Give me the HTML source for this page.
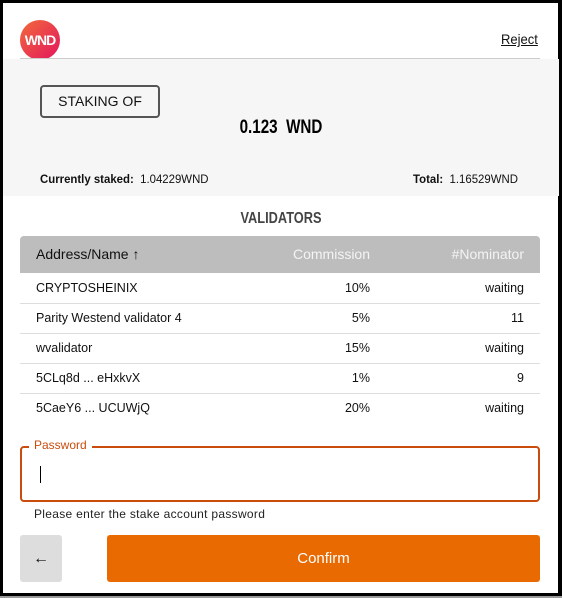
<!DOCTYPE html><html><head><style>
body{margin:0;width:562px;height:598px;background:#fff;font-family:"Liberation Sans",sans-serif;position:relative;overflow:hidden}
.a{position:absolute}
</style></head><body>
<div class="a" style="left:0;top:0;width:562px;height:596px;box-sizing:border-box;border:3px solid #000;border-right-width:4px"></div>
<div class="a" style="left:0;top:596px;width:562px;height:2px;background:#999"></div>
<div class="a" style="left:20px;top:20px;width:40px;height:40px;border-radius:50%;background:linear-gradient(135deg,#f26a3a,#e3155e);color:#fff;font-weight:bold;font-size:14px;line-height:40px;text-align:center;letter-spacing:-1px">WND</div>
<div class="a" style="left:501px;top:31px;font-size:14px;text-decoration:underline;color:#111;transform:scaleX(.93);transform-origin:left">Reject</div>
<div class="a" style="left:3px;top:59px;width:556px;height:137px;background:#f6f6f6"></div>
<div class="a" style="left:20px;top:58px;width:520px;height:1px;background:#ccc"></div>
<div class="a" style="left:40px;top:85px;width:116px;height:29px;border:2px solid #555;border-radius:4px;font-size:14px;line-height:29px;text-align:center;color:#111">STAKING OF</div>
<div class="a" style="left:0;top:117px;width:562px;text-align:center;font-size:19px;font-weight:bold;transform:scaleX(.8);color:#000">0.123&nbsp; WND</div>
<div class="a" style="left:40px;top:172px;font-size:12px;color:#111;transform:scaleX(.95);transform-origin:left"><b style="font-weight:600">Currently staked:</b>&nbsp; 1.04229WND</div>
<div class="a" style="left:413px;top:172px;font-size:12px;color:#111;transform:scaleX(.95);transform-origin:left"><b style="font-weight:600">Total:</b>&nbsp; 1.16529WND</div>
<div class="a" style="left:0;top:210px;width:562px;text-align:center;font-size:16px;font-weight:bold;color:#444;transform:scaleX(.8)">VALIDATORS</div>
<div class="a" style="left:20px;top:236px;width:520px;height:37px;background:#bdbdbd;border-radius:4px 4px 0 0;font-size:14px;line-height:37px">
<span class="a" style="left:16px;color:#111">Address/Name <b>&#8593;</b></span>
<span class="a" style="right:170px;color:#f4f4f4">Commission</span>
<span class="a" style="right:16px;color:#f4f4f4">#Nominator</span></div>
<div class="a" style="left:20px;top:273px;width:520px;font-size:12.5px;color:#111">
<div style="height:30px;line-height:30px;border-bottom:1px solid #ddd;position:relative"><span class="a" style="left:16px">CRYPTOSHEINIX</span><span class="a" style="right:170px">10%</span><span class="a" style="right:16px">waiting</span></div>
<div style="height:29px;line-height:29px;border-bottom:1px solid #ddd;position:relative"><span class="a" style="left:16px">Parity Westend validator 4</span><span class="a" style="right:170px">5%</span><span class="a" style="right:16px">11</span></div>
<div style="height:29px;line-height:29px;border-bottom:1px solid #ddd;position:relative"><span class="a" style="left:16px">wvalidator</span><span class="a" style="right:170px">15%</span><span class="a" style="right:16px">waiting</span></div>
<div style="height:29px;line-height:29px;border-bottom:1px solid #ddd;position:relative"><span class="a" style="left:16px">5CLq8d ... eHxkvX</span><span class="a" style="right:170px">1%</span><span class="a" style="right:16px">9</span></div>
<div style="height:29px;line-height:29px;position:relative"><span class="a" style="left:16px">5CaeY6 ... UCUWjQ</span><span class="a" style="right:170px">20%</span><span class="a" style="right:16px">waiting</span></div>
</div>
<div class="a" style="left:20px;top:446px;width:516px;height:52px;border:2px solid #c94c0c;border-radius:4px"></div>
<div class="a" style="left:29px;top:438px;padding:0 5px;background:#fff;font-size:12px;color:#c94c0c">Password</div>
<div class="a" style="left:40px;top:466px;width:1px;height:17px;background:#000"></div>
<div class="a" style="left:34px;top:507px;font-size:12px;color:#222;letter-spacing:.3px">Please enter the stake account password</div>
<div class="a" style="left:20px;top:535px;width:42px;height:47px;background:#ddd;border-radius:3px;font-size:16px;line-height:47px;text-align:center;color:#111;font-weight:bold">&#8592;</div>
<div class="a" style="left:107px;top:535px;width:433px;height:47px;background:#e86a00;border-radius:3px;font-size:15px;line-height:47px;text-align:center;color:#fff">Confirm</div>
</body></html>
